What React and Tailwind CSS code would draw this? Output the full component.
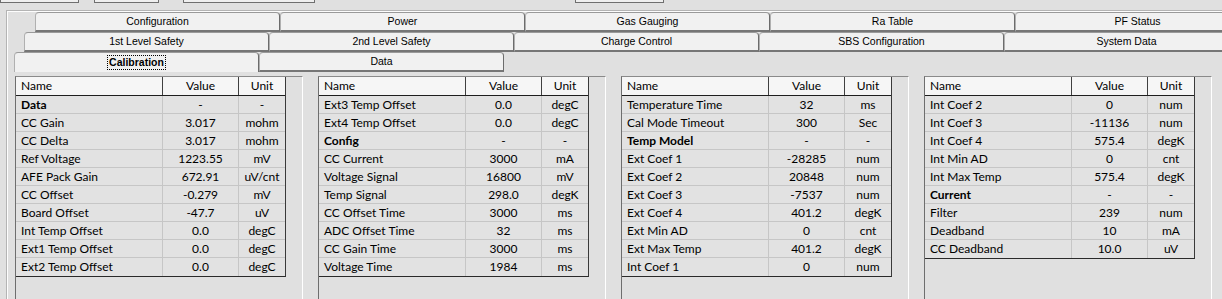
import React from "react";

const panels = [
  [
    ["Data", "-", "-", true],
    ["CC Gain", "3.017", "mohm"],
    ["CC Delta", "3.017", "mohm"],
    ["Ref Voltage", "1223.55", "mV"],
    ["AFE Pack Gain", "672.91", "uV/cnt"],
    ["CC Offset", "-0.279", "mV"],
    ["Board Offset", "-47.7", "uV"],
    ["Int Temp Offset", "0.0", "degC"],
    ["Ext1 Temp Offset", "0.0", "degC"],
    ["Ext2 Temp Offset", "0.0", "degC"],
  ],
  [
    ["Ext3 Temp Offset", "0.0", "degC"],
    ["Ext4 Temp Offset", "0.0", "degC"],
    ["Config", "-", "-", true],
    ["CC Current", "3000", "mA"],
    ["Voltage Signal", "16800", "mV"],
    ["Temp Signal", "298.0", "degK"],
    ["CC Offset Time", "3000", "ms"],
    ["ADC Offset Time", "32", "ms"],
    ["CC Gain Time", "3000", "ms"],
    ["Voltage Time", "1984", "ms"],
  ],
  [
    ["Temperature Time", "32", "ms"],
    ["Cal Mode Timeout", "300", "Sec"],
    ["Temp Model", "-", "-", true],
    ["Ext Coef 1", "-28285", "num"],
    ["Ext Coef 2", "20848", "num"],
    ["Ext Coef 3", "-7537", "num"],
    ["Ext Coef 4", "401.2", "degK"],
    ["Ext Min AD", "0", "cnt"],
    ["Ext Max Temp", "401.2", "degK"],
    ["Int Coef 1", "0", "num"],
  ],
  [
    ["Int Coef 2", "0", "num"],
    ["Int Coef 3", "-11136", "num"],
    ["Int Coef 4", "575.4", "degK"],
    ["Int Min AD", "0", "cnt"],
    ["Int Max Temp", "575.4", "degK"],
    ["Current", "-", "-", true],
    ["Filter", "239", "num"],
    ["Deadband", "10", "mA"],
    ["CC Deadband", "10.0", "uV"],
  ],
];

const rows = [
  ["Configuration", "Power", "Gas Gauging", "Ra Table", "PF Status"],
  ["1st Level Safety", "2nd Level Safety", "Charge Control", "SBS Configuration", "System Data"],
  ["Calibration", "Data"],
];
const indents = ["pl-[27px]", "pl-[16px]", "pl-[6px]"];

function Tab({ label, selected }) {
  return (
    <div
      className={
        "h-[20px] w-[245px] shrink-0 flex items-center justify-center rounded-t-[4px] border-t border-l border-r border-t-[#9a9a9a] border-l-[#b0b0b0] border-r-[#6c6c6c] bg-[#f1f1f1] text-[10.5px] text-black " +
        (selected ? "border-b-0 font-bold" : "border-b-2 border-b-[#767676]")
      }
    >
      {selected ? (
        <span className="border border-dotted border-black px-[1px] leading-[13px]">{label}</span>
      ) : (
        <span className="leading-[13px]">{label}</span>
      )}
    </div>
  );
}

function Panel({ data }) {
  return (
    <div className="w-[288px] h-[240px] shrink-0 border-l border-t border-r border-l-[#6e6e6e] border-t-[#8a8a8a] border-r-white">
      <div
        className="w-[270px] border-r border-b border-r-[#3a3a3a] border-b-[#2a2a2a] text-[12px] text-black"
        style={{ fontFamily: '"Comic Sans MS", Lato, "Open Sans", sans-serif' }}
      >
        <div className="flex h-[19px] bg-[#f6f6f6] border-b border-b-[#1e1e1e]">
          <div className="w-[147px] border-r border-r-[#404040] pl-[5px] leading-[18px]">Name</div>
          <div className="w-[76px] border-r border-r-[#404040] text-center leading-[18px]">Value</div>
          <div className="w-[46px] text-center leading-[18px]">Unit</div>
        </div>
        {data.map(([n, v, u, bold], i) => (
          <div
            key={i}
            className={
              "flex h-[18px] bg-[#e2e2e2] " +
              (i < data.length - 1 ? "border-b border-b-[#c6c6c6]" : "")
            }
          >
            <div className={"w-[147px] border-r border-r-[#c6c6c6] pl-[5px] leading-[17px] " + (bold ? "font-bold" : "")}>{n}</div>
            <div className="w-[76px] border-r border-r-[#c6c6c6] text-center leading-[17px]">{v}</div>
            <div className="w-[46px] text-center leading-[17px]">{u}</div>
          </div>
        ))}
      </div>
    </div>
  );
}

export default function App() {
  return (
    <div
      className="w-[1222px] h-[299px] overflow-hidden bg-[#e0e0e0]"
      style={{ fontFamily: '"Liberation Sans", Arial, sans-serif' }}
    >
      <div className="flex h-[3px]">
        <div className="w-[79px] shrink-0 border-x border-b border-[#6f6f6f] bg-[#efefef]" />
        <div className="ml-[15px] w-[65px] shrink-0 border-x border-b border-[#6f6f6f] bg-[#efefef]" />
        <div className="ml-[24px] w-[132px] shrink-0 border-x border-b border-[#6f6f6f] bg-[#efefef]" />
        <div className="ml-[260px] w-[89px] shrink-0 border-x border-b border-[#6f6f6f] bg-[#efefef]" />
      </div>
      <div className="mt-[8px] ml-[7px] h-[300px] border-t border-l border-t-[#fdfdfd] border-l-[#fdfdfd] outline outline-1 outline-[#b4b4b4]">
        {rows.map((r, ri) => (
          <div key={ri} className={"flex " + indents[ri]}>
            {r.map((t, ti) => (
              <Tab key={ti} label={t} selected={ri === 2 && ti === 0} />
            ))}
          </div>
        ))}
        <div className="flex gap-[15px] pl-[7px] pt-[4px]">
          {panels.map((p, i) => (
            <Panel key={i} data={p} />
          ))}
        </div>
      </div>
    </div>
  );
}
